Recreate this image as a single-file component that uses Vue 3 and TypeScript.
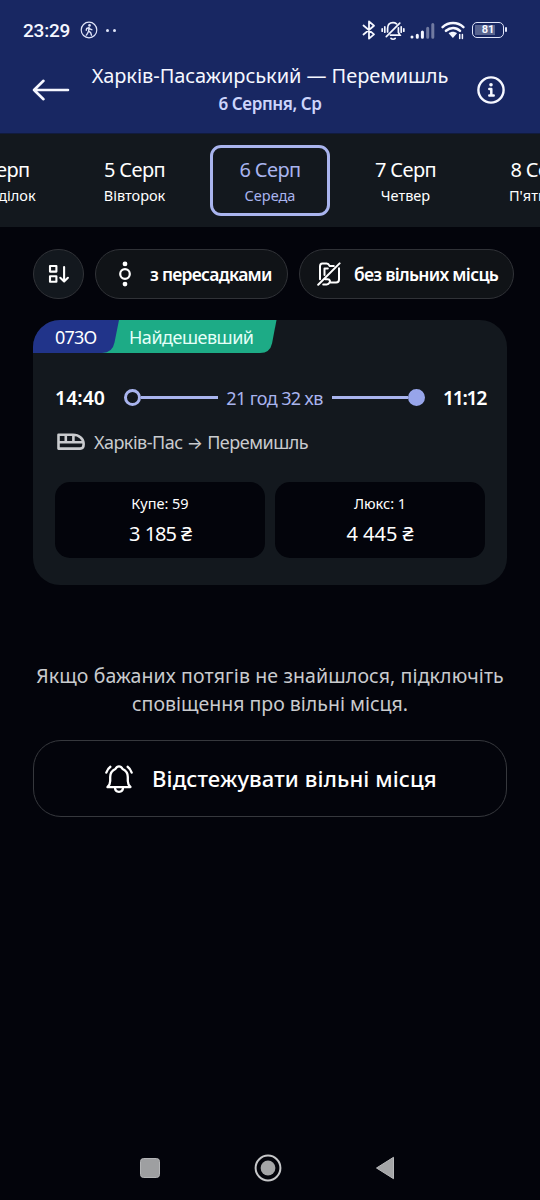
<script setup lang="ts">
interface Day { date: string; weekday: string; active?: boolean }
interface Fare { label: string; price: string; tight?: boolean }

const days: Day[] = [
  { date: '4 Серп', weekday: 'Понеділок' },
  { date: '5 Серп', weekday: 'Вівторок' },
  { date: '6 Серп', weekday: 'Середа', active: true },
  { date: '7 Серп', weekday: 'Четвер' },
  { date: '8 Серп', weekday: 'П\'ятниця' },
]
const fares: Fare[] = [
  { label: 'Купе: 59', price: '3 185 ₴', tight: true },
  { label: 'Люкс: 1', price: '4 445 ₴' },
]
</script>

<template>
  <div class="screen">
    <header class="top">
      <div class="status">
        <span class="clock">23:29</span>
        <svg class="walk" width="18" height="18" viewBox="0 0 18 18" fill="none" stroke="currentColor" stroke-linecap="round" stroke-linejoin="round">
          <circle cx="9" cy="9" r="7.8" stroke-width="1.2" />
          <circle cx="9.5" cy="4.4" r="1.3" fill="currentColor" stroke="none" />
          <path d="M9 6.6 8.6 10l2 1.6.9 2.6M8.4 10.4l-.8 1.9-1.3 1.8M6.2 9.2l.5-1.7L9 6.6l1.3 1.6 1.5.5" stroke-width="1.4" />
        </svg>
        <span class="dots"><i></i><i></i></span>
        <div class="signals">
          <svg width="16" height="20" viewBox="0 0 16 20" fill="none" stroke="currentColor" stroke-width="1.8" stroke-linejoin="round" stroke-linecap="round">
            <path d="M2.5 5.5 13 14.4 8 18.6V1.4l5 4.3L2.5 14.5" />
          </svg>
          <svg class="mute" width="24" height="20" viewBox="0 0 24 20" fill="none" stroke="currentColor" stroke-width="1.7" stroke-linecap="round">
            <path d="M1.2 8.8v2.4M3.8 6.8v5.4M22.8 8.8v2.4M20.2 6.8v5.4M6.6 12V8.4c0-3.4 2-5.8 5.4-5.8 1.4 0 2.6.4 3.5 1.2M17.4 7.8v4.6l1.6 2.8H9.5M5.3 16.6 18.8 3.1M10 18.3c1 1 3.2 1 4.2 0" />
          </svg>
          <svg class="cell" width="25" height="18" viewBox="0 0 25 18" stroke-width="3" stroke-linecap="round" stroke="currentColor">
            <path d="M2 15v.1M7.3 13.2v2M12.4 10v5.2" />
            <path d="M17.7 6.2v9M22.8 2.6v12.6" opacity=".4" />
          </svg>
          <svg class="wifi" width="24" height="20" viewBox="0 0 24 20" fill="none" stroke="currentColor" stroke-linecap="round">
            <path d="M1.6 7.1c6-5.4 15-5.4 20.8 0M5 10.8c4.3-3.9 10-3.9 14 0" stroke-width="2.5" />
            <path d="M7.6 13.3c2.6-2 6-2 8.4 0L11.9 18z" fill="currentColor" stroke="none" />
            <path d="M18.7 18.6v-4.2M21.4 14.4v4.2" stroke-width="1.5" />
          </svg>
          <span class="battery">81</span>
        </div>
      </div>
      <div class="bar">
        <svg class="back" width="38" height="24" viewBox="0 0 38 24" fill="none" stroke="currentColor" stroke-width="2.6" stroke-linecap="round" stroke-linejoin="round">
          <path d="M36 12H2M11.5 2.8 2 12l9.500 9.200" />
        </svg>
        <div class="titles">
          <h1><span>Харків-Пасажирський — Перемишль</span></h1>
          <p>6 Серпня, Ср</p>
        </div>
        <svg class="info" width="28" height="28" viewBox="0 0 28 28" fill="none" stroke="currentColor" stroke-width="2.4" stroke-linecap="round" stroke-linejoin="round">
          <circle cx="14" cy="14" r="12.6" />
          <path d="M12.3 13h2v6.4M12.3 19.6h4.4" stroke-width="2.5" />
          <circle cx="14" cy="8.8" r="1.8" fill="currentColor" stroke="none" />
        </svg>
      </div>
    </header>

    <nav class="days">
      <div v-for="d in days" :key="d.date" class="day" :class="{ active: d.active }">
        <span class="date">{{ d.date }}</span>
        <span class="weekday">{{ d.weekday }}</span>
      </div>
    </nav>

    <main>
      <div class="filters">
        <button class="pill sort">
          <svg width="22" height="20" viewBox="0 0 22 20" fill="none" stroke="currentColor" stroke-width="2.1" stroke-linejoin="round" stroke-linecap="round">
            <path d="M2 2h6.4v5.6H2zM2 12.2h6.4v5.6H2zM16.1 3v14.4M12.3 13.8l3.8 3.8 3.8-3.8" />
          </svg>
        </button>
        <button class="pill transfers">
          <svg width="12" height="26" viewBox="0 0 12 26" fill="currentColor">
            <circle cx="6" cy="2.9" r="2.4" /><circle cx="6" cy="23.1" r="2.4" />
            <circle cx="6" cy="13" r="4.8" fill="none" stroke="currentColor" stroke-width="2.2" />
          </svg>
          <span>з пересадками</span>
        </button>
        <button class="pill seats">
          <svg width="24" height="24" viewBox="0 0 24 24" fill="none" stroke="currentColor" stroke-width="2" stroke-linecap="round" stroke-linejoin="round">
            <path d="M1.2 22.8 22.6 1.4M3 17.2V4.4C3 2.6 3.8 1.6 5.4 1.6h4.2c1.8 0 2.4 1 3 2.3h4.2M7.5 13V6.6h3.3M22 6.2v11.4c0 2-1 3-2.9 3h-5.9M8.2 17.2h2.6c2.4 0 2.4 2.4 1.7 3.5-.6 1.3-1.6 1.7-2.8 1.7H6.2" />
          </svg>
          <span>без вільних місць</span>
        </button>
      </div>

      <article class="card">
        <div class="tags">
          <svg class="shapes" width="244" height="33" viewBox="0 0 244 33">
            <path d="M60 0H243.5L239 23.5Q237 33 227 33H60Z" fill="#1dab86" />
            <path d="M0 0H86L81.5 22.5Q79.5 33 69 33H0Z" fill="#21348a" />
          </svg>
          <span class="number">073О</span>
          <span class="cheap">Найдешевший</span>
        </div>
        <div class="times">
          <b class="dep">14:40</b>
          <div class="track">
            <i class="ring"></i><i class="line"></i>
            <span>21 год 32 хв</span>
            <i class="line"></i><i class="ring full"></i>
          </div>
          <b class="arr">11:12</b>
        </div>
        <div class="route">
          <svg width="28" height="18" viewBox="0 0 28 18" fill="none" stroke="currentColor" stroke-width="2.6" stroke-linejoin="round">
            <path d="M1.5 1.7H16c6.3 0 10.6 4.3 10.6 8.9v1.200c0 2.300-1.100 3.800-3.400 3.800H1.500zM1.500 9.200h24.700M8.800 2v7M16.400 2v7" />
          </svg>
          <span>Харків-Пас <span class="arrow">→</span> Перемишль</span>
        </div>
        <div class="fares">
          <div v-for="f in fares" :key="f.label" class="fare">
            <span class="label">{{ f.label }}</span>
            <span class="price" :class="{ tight: f.tight }">{{ f.price }}</span>
          </div>
        </div>
      </article>

      <p class="hint"><span class="l1">Якщо бажаних потягів не знайшлося, підключіть</span><br /><span>сповіщення про вільні місця.</span></p>

      <button class="track-btn">
        <svg width="28" height="28" viewBox="0 0 28 28" fill="none" stroke="currentColor" stroke-width="2.3" stroke-linecap="round" stroke-linejoin="round">
          <path d="M2.500 22.100h23c-1.800-1.800-2.700-3.200-2.700-6.200v-4c0-3.700-2-6.400-5.200-7.900-.9-1.700-2-2.700-3.600-2.700s-2.700 1-3.600 2.700c-3.200 1.500-5.200 4.200-5.200 7.900v4c0 3-.9 4.400-2.700 6.200M10 22.500c0 2.600 1.700 4.300 4 4.300s4-1.700 4-4.300M1.300 7.600C2.100 5.200 3.300 3.300 5.400 1.800M26.700 7.600c-.8-2.400-2-4.300-4.100-5.800" />
        </svg>
        <span>Відстежувати вільні місця</span>
      </button>
    </main>

    <footer class="sysnav">
      <svg width="20" height="20" viewBox="0 0 20 20"><rect x=".5" y=".5" width="19" height="19" rx="3" fill="#9e9fa1" stroke="#b4b5b7" /></svg>
      <svg width="28" height="28" viewBox="0 0 28 28"><circle cx="14" cy="14" r="12.4" fill="none" stroke="#c6c7c9" stroke-width="2" /><circle cx="14" cy="14" r="7.4" fill="#a4a5a7" /></svg>
      <svg width="20" height="24" viewBox="0 0 20 24"><path d="M1.5 12 18.5 1.3v21.4z" fill="#a4a5a7" stroke="#b8b9bb" stroke-linejoin="round" /></svg>
    </footer>
  </div>
</template>

<style>
html, body { background: #03040b; }
</style>

<style scoped>
* { box-sizing: border-box; }
.screen {
  display: flex; flex-direction: column;
  width: 540px; height: 1200px; overflow: hidden;
  background: #03040b; color: #fff;
  font-family: "Noto Sans", "Open Sans", sans-serif;
}
svg { display: block; flex: none; }
button { font: inherit; color: inherit; background: none; padding: 0; margin: 0; }
h1, p { margin: 0; font-weight: 400; }
span, b { white-space: nowrap; }

.top { height: 134px; background: #182762; border-bottom: 1px solid #111b3d; color: #f5f7ff; flex: none; }
.status { display: flex; align-items: center; height: 60px; padding: 0 33px 0 23px; }
.clock { font: 500 19px/24px Roboto, sans-serif; width: 47px; padding-top: 2px; letter-spacing: -.2px; }
.walk { margin-left: 10px; color: #dfe4f8; }
.dots { display: flex; gap: 4px; margin-left: 8px; }
.dots i { width: 3px; height: 3px; border-radius: 50%; background: #dfe4f8; }
.signals { display: flex; align-items: center; margin-left: auto; }
.mute { margin-left: 4px; }
.cell { margin-left: 5px; margin-top: 2px; }
.wifi { margin-left: 6px; }
.battery {
  position: relative; width: 32px; height: 16px; margin: 0 3px 0 7px;
  border: 1.5px solid #dfe4f8; border-radius: 5px;
  background: linear-gradient(90deg, #58648f 76%, transparent 76%) 2px 1.5px / 26px 10px no-repeat;
  font: 700 11px/14px Roboto, sans-serif; text-align: center;
}
.battery::after { content: ''; position: absolute; right: -4px; top: 4px; width: 2px; height: 5px; border-radius: 1px; background: #dfe4f8; }

.bar { display: flex; align-items: center; height: 60px; padding: 0 35px 0 32px; }
.titles { flex: 1; text-align: center; padding-right: 7px; }
.titles h1 { display: flex; justify-content: center; font-size: 20px; line-height: 28px; letter-spacing: -.05px; }
.titles p { font-size: 17px; line-height: 28px; font-weight: 600; letter-spacing: -.4px; color: #cdd5fb; }

.days { display: flex; justify-content: center; align-items: center; gap: 16px; height: 93px; background: #13181e; flex: none; }
.day {
  display: flex; flex-direction: column; align-items: center; flex: none;
  width: 119.5px; height: 71px; padding-top: 8px; border: 3px solid transparent; border-radius: 11px;
}
.day.active { border-color: #a9b4ee; color: #a9b4ee; }
.date { font-size: 20px; line-height: 27px; letter-spacing: -.6px; }
.weekday { font-size: 14.5px; line-height: 25px; }

main { padding: 22px 0 0 33px; width: 507px; flex: 1; }
.filters { display: flex; gap: 11px; width: 481px; }
.pill { display: flex; align-items: center; height: 50px; border: 1.5px solid #303237; border-radius: 25px; background: #101317; flex: none; font-size: 17.5px; font-weight: 600; letter-spacing: -.72px; }
.pill span { padding-bottom: 1px; }
.sort { width: 51px; justify-content: center; background: #13181e; }
.transfers { width: 193px; padding-left: 23px; gap: 19px; }
.seats { width: 215px; padding-left: 17px; gap: 13px; }

.card { height: 265px; margin-top: 21px; border-radius: 27px; background: #13181e; overflow: hidden; }
.tags { position: relative; height: 33px; display: flex; align-items: center; font-size: 18px; }
.shapes { position: absolute; left: 0; top: 0; }
.number, .cheap { position: relative; }
.number { width: 74px; padding-left: 22px; letter-spacing: -.8px; }
.cheap { padding-left: 22px; letter-spacing: -.5px; color: #e4fff8; }
.times { display: flex; align-items: center; margin: 29px 22px 0; height: 31px; }
.times b { font-size: 19.5px; font-weight: 600; }
.dep { width: 69px; }
.track { display: flex; align-items: center; width: 301px; color: #a9b4ee; font-size: 18px; }
.track span { width: 114px; text-align: center; letter-spacing: -.6px; }
.ring { width: 17px; height: 17px; border: 3px solid #a9b4ee; border-radius: 50%; flex: none; }
.ring.full { background: #97a5ea; border-color: #97a5ea; }
.line { flex: 1; height: 3px; background: #a9b4ee; }
.times .arr { margin-left: auto; letter-spacing: -1.4px; margin-right: -1px; }
.route { display: flex; align-items: center; gap: 9px; height: 30px; margin: 14px 0 0 24px; font-size: 18px; letter-spacing: -.5px; color: #c9cbce; }
.arrow { font-family: Inter, sans-serif; font-size: 17px; letter-spacing: 0; }
.fares { display: flex; gap: 10px; margin: 25px 22px 0; }
.fare { flex: 1; height: 76px; border-radius: 15px; background: #03040b; display: flex; flex-direction: column; align-items: center; padding-top: 8px; }
.label { font-size: 14.5px; line-height: 26px; }
.price { font-size: 20px; line-height: 35px; }
.price.tight { letter-spacing: -1.1px; word-spacing: 1.2px; }

.hint { margin-top: 77px; text-align: center; font-size: 19.5px; line-height: 28px; color: #c9cbce; }
.hint span { display: inline-block; }
.hint .l1 { letter-spacing: .12px; margin: 0 -10px; }
.track-btn { display: flex; align-items: center; justify-content: flex-start; width: 474px; height: 77px; margin-top: 22px; padding-left: 71px; gap: 19px; border: 1.5px solid #36383d; border-radius: 28px; font-size: 22px; font-weight: 500; letter-spacing: .12px; }
.track-btn span { padding-bottom: 2px; }

.sysnav { display: flex; align-items: center; justify-content: space-between; height: 65px; padding: 0 145px 0 140px; flex: none; }
</style>
